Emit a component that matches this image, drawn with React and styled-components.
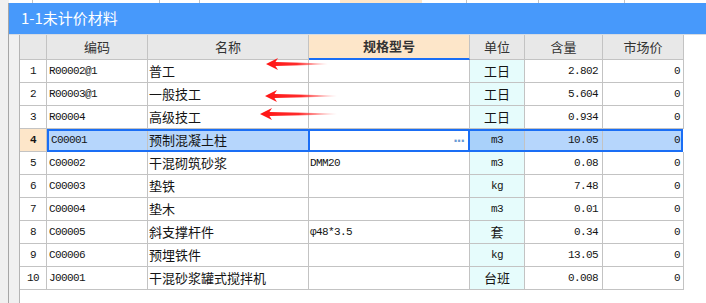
import styled, { createGlobalStyle } from "styled-components";

const GlobalStyle = createGlobalStyle`
  html, body {
    margin: 0;
    padding: 0;
    background: #f0f0f0;
  }
  * {
    box-sizing: border-box;
  }
`;

const CJK = `"Noto Sans CJK SC", "Noto Sans", sans-serif`;
const MONO = `"Liberation Mono", "Noto Sans CJK SC", monospace`;
const LINE = "#c3c3c3";
const BLUE = "#1a6ef5";

// column widths (including the right grid line)
const COLS = [27, 101, 161, 161, 55, 78, 81];

const Page = styled.div`
  position: relative;
  width: 706px;
  height: 303px;
  overflow: hidden;
  display: flex;
  flex-direction: column;
  background: #f0f0f0;
`;

const Strip = styled.div`
  height: 3px;
  display: flex;
  overflow: hidden;
  flex-shrink: 0;
`;

const StripCell = styled.div`
  width: ${(p) => p.$w}px;
  height: 3px;
  flex-shrink: 0;
  background: ${(p) => p.$bg || "#fff"};
  border-right: ${(p) => (p.$line ? `1px solid ${LINE}` : "none")};
`;

const Main = styled.div`
  flex: 1;
  display: flex;
  min-height: 0;
`;

const Gutter = styled.div`
  width: 8px;
  flex-shrink: 0;
  background: #f0f0f0;
`;

const Window = styled.div`
  flex: 1;
  display: flex;
  flex-direction: column;
  border-left: 1px solid #a6a6a6;
  min-width: 0;
`;

const TitleBar = styled.div`
  height: 32px;
  flex-shrink: 0;
  background: #4799fb;
  border-bottom: 1px solid #d6dbe2;
  display: flex;
  align-items: center;
  padding-left: 12px;
  padding-bottom: 2px;
  color: #fff;
  font-family: ${CJK};
  font-size: 15px;
`;

const Body = styled.div`
  flex: 1;
  display: flex;
  padding-left: 10px;
  background: #f0f0f0;
`;

const GridArea = styled.div`
  flex: 1;
  background: #fff;
  border-left: 1px solid #b4b4b4;
  display: flex;
  flex-direction: column;
`;

const Row = styled.div`
  display: flex;
  height: ${(p) => (p.$head ? 25 : 23)}px;
  flex-shrink: 0;
`;

const Cell = styled.div`
  width: ${(p) => p.$w}px;
  flex-shrink: 0;
  height: 100%;
  display: flex;
  align-items: center;
  justify-content: ${(p) => p.$align || "flex-start"};
  padding: 0 ${(p) => p.$pr ?? 2}px ${(p) => (p.$cjk ? 2 : 0)}px ${(p) => p.$pl ?? 2}px;
  border-right: 1px solid ${LINE};
  border-bottom: 1px solid ${LINE};
  background: ${(p) => p.$bg || "#fff"};
  font-family: ${(p) => (p.$cjk ? CJK : MONO)};
  font-size: ${(p) => (p.$cjk ? "13px" : "11px")};
  line-height: 1;
  letter-spacing: ${(p) => (p.$cjk ? "0" : "-0.6px")};
  font-weight: ${(p) => (p.$bold ? "bold" : "normal")};
  color: #141414;
  white-space: nowrap;
  overflow: hidden;
`;

const HeadCell = styled(Cell)`
  background: ${(p) => (p.$peach ? "#fde6c9" : "#e8e8e8")};
  border-bottom: ${(p) => (p.$peach ? `2px solid ${BLUE}` : `1px solid ${LINE}`)};
  color: #333;
  font-family: ${CJK};
  font-size: 13px;
  letter-spacing: 0;
  justify-content: center;
  padding-bottom: 2px;
  font-weight: ${(p) => (p.$peach ? "bold" : "normal")};
`;

const SelBox = styled.div`
  width: 636px;
  height: 23px;
  flex-shrink: 0;
  display: flex;
  border: 2px solid ${BLUE};
`;

const SelCell = styled(Cell)`
  border-bottom: none;
  border-right: ${(p) => (p.$noline ? "none" : `1px solid ${LINE}`)};
  background: ${(p) => p.$bg || "#b6d6fc"};
`;

const SpecEdit = styled.div`
  width: 162px;
  flex-shrink: 0;
  height: 100%;
  background: #fff;
  border-left: 2px solid ${BLUE};
  border-right: 2px solid ${BLUE};
  display: flex;
  align-items: center;
  justify-content: flex-end;
  padding-right: 4px;
  color: #6a9bd4;
  font-family: "DejaVu Sans", sans-serif;
  font-size: 12px;
  font-weight: bold;
  letter-spacing: -1px;
`;

const ArrowWrap = styled.svg`
  position: absolute;
  left: ${(p) => p.$x}px;
  top: ${(p) => p.$y - 7}px;
  pointer-events: none;
`;

const hasCjk = (s) => /[\u4e00-\u9fff]/.test(s);

const rows = [
  ["1", "R00002@1", "普工", "", "工日", "2.802", "0"],
  ["2", "R00003@1", "一般技工", "", "工日", "5.604", "0"],
  ["3", "R00004", "高级技工", "", "工日", "0.934", "0"],
  ["4", "C00001", "预制混凝土柱", "", "m3", "10.05", "0"],
  ["5", "C00002", "干混砌筑砂浆", "DMM20", "m3", "0.08", "0"],
  ["6", "C00003", "垫铁", "", "kg", "7.48", "0"],
  ["7", "C00004", "垫木", "", "m3", "0.01", "0"],
  ["8", "C00005", "斜支撑杆件", "φ48*3.5", "套", "0.34", "0"],
  ["9", "C00006", "预埋铁件", "", "kg", "13.05", "0"],
  ["10", "J00001", "干混砂浆罐式搅拌机", "", "台班", "0.008", "0"],
];

const SELECTED = 3;

const heads = ["", "编码", "名称", "规格型号", "单位", "含量", "市场价"];

const stripCells = [
  { w: 24, line: true },
  { w: 127, line: true },
  { w: 40, line: true },
  { w: 140, line: false },
  { w: 82, line: false, bg: "#fde6c9" },
  { w: 45, line: true },
  { w: 72, line: true },
  { w: 86, line: true },
  { w: 81, line: false },
];

function Arrow({ x, y, len, id }) {
  return (
    <ArrowWrap $x={x} $y={y} width={len} height={14} viewBox={`0 0 ${len} 14`}>
      <defs>
        <linearGradient id={id} x1="0" x2="1" y1="0" y2="0">
          <stop offset="0" stopColor="#ff1414" />
          <stop offset="0.5" stopColor="#ff2020" stopOpacity="0.95" />
          <stop offset="1" stopColor="#ff4a4a" stopOpacity="0" />
        </linearGradient>
      </defs>
      <path
        d={`M0 7 L12 1 L9.5 5 L${len} 6.4 L${len} 7.6 L9.5 9 L12 13 Z`}
        fill={`url(#${id})`}
      />
    </ArrowWrap>
  );
}

function DataRow({ r }) {
  return (
    <Row>
      <Cell $w={COLS[0]} $align="center" $pl={0} $pr={0}>
        {r[0]}
      </Cell>
      <Cell $w={COLS[1]}>{r[1]}</Cell>
      <Cell $w={COLS[2]} $cjk $pl={1}>
        {r[2]}
      </Cell>
      <Cell $w={COLS[3]} $pl={1}>
        {r[3]}
      </Cell>
      <Cell $w={COLS[4]} $align="center" $cjk={hasCjk(r[4])} $bg="#e6fcfc">
        {r[4]}
      </Cell>
      <Cell $w={COLS[5]} $align="flex-end" $pr={4}>
        {r[5]}
      </Cell>
      <Cell $w={COLS[6]} $align="flex-end" $pr={3}>
        {r[6]}
      </Cell>
    </Row>
  );
}

function SelectedRow({ r }) {
  return (
    <Row>
      <Cell $w={COLS[0]} $align="center" $pl={0} $pr={0} $bg="#fde6c9" $bold>
        {r[0]}
      </Cell>
      <SelBox>
        <SelCell $w={99}>{r[1]}</SelCell>
        <SelCell $w={160} $cjk $pl={1} $noline>
          {r[2]}
        </SelCell>
        <SpecEdit>···</SpecEdit>
        <SelCell $w={55} $align="center" $bg="#a9d1fa">
          {r[4]}
        </SelCell>
        <SelCell $w={78} $align="flex-end" $pr={4}>
          {r[5]}
        </SelCell>
        <SelCell $w={78} $align="flex-end" $pr={1} $noline>
          {r[6]}
        </SelCell>
      </SelBox>
    </Row>
  );
}

export default function App() {
  return (
    <>
      <GlobalStyle />
      <Page>
        <Strip>
          <StripCell $w={9} $bg="#f0f0f0" />
          {stripCells.map((c, i) => (
            <StripCell key={i} $w={c.w} $line={c.line} $bg={c.bg} />
          ))}
        </Strip>
        <Main>
          <Gutter />
          <Window>
            <TitleBar>1-1未计价材料</TitleBar>
            <Body>
              <GridArea>
                <Row $head>
                  {heads.map((h, i) => (
                    <HeadCell key={i} $w={COLS[i]} $peach={i === 3}>
                      {h}
                    </HeadCell>
                  ))}
                </Row>
                {rows.map((r, i) =>
                  i === SELECTED ? (
                    <SelectedRow key={i} r={r} />
                  ) : (
                    <DataRow key={i} r={r} />
                  )
                )}
              </GridArea>
            </Body>
          </Window>
        </Main>
        <Arrow x={266} y={64} len={62} id="a1" />
        <Arrow x={265} y={96} len={72} id="a2" />
        <Arrow x={260} y={114} len={77} id="a3" />
      </Page>
    </>
  );
}
